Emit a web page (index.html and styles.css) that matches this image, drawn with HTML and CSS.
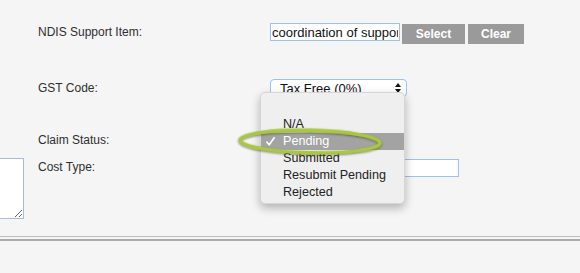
FILE: index.html
```html
<!DOCTYPE html>
<html>
<head>
<meta charset="utf-8">
<link rel="stylesheet" href="styles.css">
</head>
<body>
<div class="form">
  <div class="label row1">NDIS Support Item:</div>
  <div class="field row1 support">
    <input class="text-input item-input" type="text" value="coordination of support">
    <button class="btn select-btn">Select</button>
    <button class="btn clear-btn">Clear</button>
  </div>

  <div class="label row2">GST Code:</div>
  <div class="field row2">
    <div class="fake-select gst">
      <span>Tax Free (0%)</span>
      <svg class="arrows" width="6" height="10" viewBox="0 0 6 10"><path d="M0 4 L3 0 L6 4 Z M0 6 L3 10 L6 6 Z" fill="#111"/></svg>
    </div>
  </div>

  <div class="label row3">Claim Status:</div>
  <div class="field row3 status">
    <div class="fake-select claim"></div>
    <div class="menu">
      <div class="opt blank"></div>
      <div class="opt">N/A</div>
      <div class="opt active"><svg class="check" width="9" height="9" viewBox="0 0 9 9"><path d="M0.8 5 L3.2 7.8 L8.2 0.8" fill="none" stroke="#fff" stroke-width="1.6" stroke-linecap="round" stroke-linejoin="round"/></svg>Pending</div>
      <div class="opt">Submitted</div>
      <div class="opt">Resubmit Pending</div>
      <div class="opt">Rejected</div>
    </div>
    <svg class="ring" width="150" height="34" viewBox="0 0 150 34">
      <defs>
        <filter id="sh" x="-10%" y="-40%" width="120%" height="180%">
          <feDropShadow dx="0" dy="1" stdDeviation="0.8" flood-color="#3a4a10" flood-opacity="0.7"/>
        </filter>
      </defs>
      <ellipse cx="75" cy="17.5" rx="70" ry="11.2" fill="none" stroke="#a9c841" stroke-width="3.4" filter="url(#sh)" transform="rotate(1.2 75 17)"/>
    </svg>
  </div>

  <div class="side row4"><textarea class="notes"></textarea></div>
  <div class="label row4">Cost Type:</div>
  <div class="field row4">
    <input class="text-input cost-input" type="text">
  </div>
</div>
<div class="rule-thin"></div>
<div class="rule-thick"></div>
</body>
</html>
```

FILE: styles.css
```css
html, body {
  margin: 0;
  padding: 0;
  background: #f5f5f5;
  width: 580px;
  height: 273px;
  overflow: hidden;
  font-family: "Liberation Sans", Arial, sans-serif;
}

.form {
  display: grid;
  grid-template-columns: 24px 246px 1fr;
  grid-template-rows: 56px 52px 27px 61px;
  padding-top: 23px;
}

.label {
  grid-column: 2;
  padding-left: 14px;
  padding-top: 2px;
  font-size: 12px;
  line-height: 14px;
  color: #2e2e2e;
}

.field { grid-column: 3; }
.side { grid-column: 1; display: flex; justify-content: flex-end; }

.row1 { grid-row: 1; }
.row2 { grid-row: 2; }
.row3 { grid-row: 3; }
.row4 { grid-row: 4; }

.support {
  display: flex;
  align-items: flex-start;
}

.text-input {
  box-sizing: border-box;
  margin: 0;
  background: #fff;
  border: 1px solid #9cc2e8;
  outline: none;
  font-family: "Liberation Sans", Arial, sans-serif;
  font-size: 13px;
  color: #111;
}

.item-input {
  width: 130px;
  height: 18px;
  padding: 0 1px;
}

.btn {
  margin: 1px 0 0 0;
  height: 20px;
  border: none;
  background: #9a9a9a;
  color: #fff;
  font-family: "Liberation Sans", Arial, sans-serif;
  font-weight: bold;
  font-size: 12px;
  padding: 0;
}
.select-btn { width: 63px; margin-left: 2px; }
.clear-btn { width: 56px; margin-left: 3px; }

.fake-select {
  box-sizing: border-box;
  width: 137px;
  height: 18px;
  background: #fff;
  border: 1px solid #9cc2e8;
  border-radius: 4px;
  display: flex;
  align-items: center;
  justify-content: space-between;
  padding: 0 5px 0 9px;
  font-size: 13px;
  color: #111;
}
.arrows { display: block; }

.status { position: relative; }
.claim { margin-top: 1px; width: 132px; }

.menu {
  position: absolute;
  left: -10px;
  top: -39px;
  width: 145px;
  box-sizing: border-box;
  padding: 6px 0 2px;
  background: #efefef;
  border: 1px solid #d6d6d6;
  border-radius: 5px;
  box-shadow: 0 4px 10px rgba(0, 0, 0, 0.28);
  font-size: 12.6px;
  color: #222;
  z-index: 2;
}

.opt {
  height: 17px;
  line-height: 17px;
  padding-left: 22px;
  position: relative;
}
.opt.active {
  background: #a3a3a3;
  color: #fff;
}
.check {
  position: absolute;
  left: 5px;
  top: 4px;
}

.ring {
  position: absolute;
  left: -35px;
  top: -7px;
  z-index: 3;
}

.notes {
  box-sizing: border-box;
  width: 150px;
  height: 61px;
  flex: none;
  margin: 0;
  background: #fff;
  border: 1px solid #a9bed1;
  resize: both;
}

.cost-input {
  width: 189px;
  height: 18px;
}

.rule-thin {
  margin-top: 17px;
  height: 1px;
  background: #bdbdbd;
}
.rule-thick {
  margin-top: 2px;
  height: 2px;
  background: #ababab;
}
```
